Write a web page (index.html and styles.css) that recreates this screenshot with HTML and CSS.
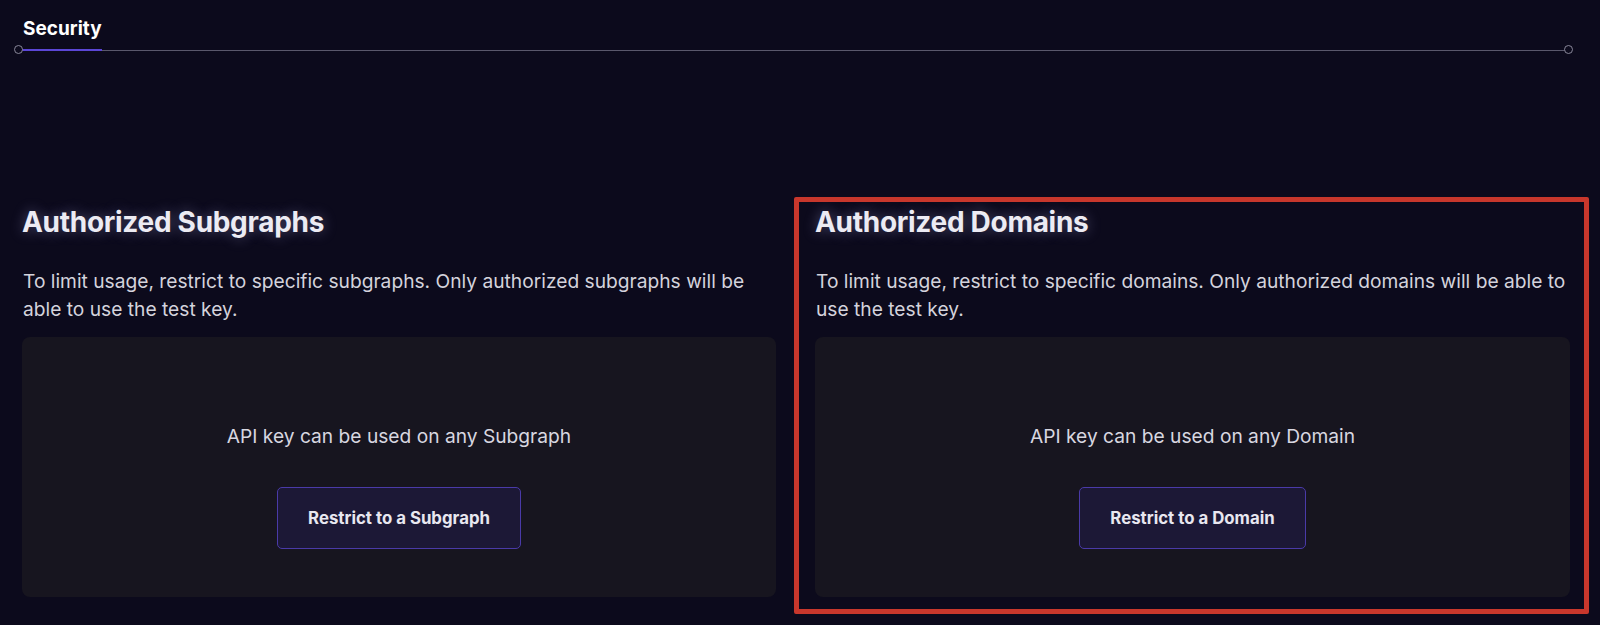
FILE: index.html
```html
<!DOCTYPE html>
<html lang="en">
<head>
<meta charset="utf-8">
<title>Security</title>
<link rel="stylesheet" href="styles.css">
</head>
<body>
  <nav class="tabs">
    <div class="tab tab-active">Security</div>
  </nav>
  <main class="columns">
    <section class="col">
      <h2 class="title">Authorized Subgraphs</h2>
      <p class="desc">To limit usage, restrict to specific subgraphs. Only authorized subgraphs will be able to use the test key.</p>
      <div class="card">
        <p class="card-text">API key can be used on any Subgraph</p>
        <button class="btn">Restrict to a Subgraph</button>
      </div>
    </section>
    <section class="col col-highlight">
      <h2 class="title">Authorized Domains</h2>
      <p class="desc">To limit usage, restrict to specific domains. Only authorized domains will be able to use the test key.</p>
      <div class="card">
        <p class="card-text">API key can be used on any Domain</p>
        <button class="btn">Restrict to a Domain</button>
      </div>
      <div class="highlight"></div>
    </section>
  </main>
</body>
</html>
```

FILE: styles.css
```css
* { box-sizing: border-box; }

html, body {
  margin: 0;
  padding: 0;
  background: #0c0a1c;
  height: 100%;
  overflow: hidden;
}

body {
  font-family: "Inter", "Lato", "Liberation Sans", sans-serif;
  color: #e6e5ee;
}

.tabs {
  position: relative;
  display: flex;
  margin: 0 30px 0 17px;
  padding-top: 16px;
  border-bottom: 1px solid #5a586c;
}

.tabs::before,
.tabs::after {
  content: "";
  position: absolute;
  bottom: -4px;
  width: 7px;
  height: 7px;
  border: 1.5px solid #8a889a;
  border-radius: 50%;
  background: #0c0a1c;
}

.tabs::before { left: -3px; }
.tabs::after { right: -3px; }

.tab {
  font-size: 19px;
  line-height: 24px;
  font-weight: 700;
  padding: 1px 0 8px 6px;
  color: #ffffff;
}

.tab-active {
  border-bottom: 2px solid #5b46d6;
  margin-bottom: -1px;
}

.columns {
  display: grid;
  grid-template-columns: 754px 755px;
  column-gap: 39px;
  padding: 0 30px 0 22px;
  margin-top: 153px;
}

.col {
  position: relative;
  display: flex;
  flex-direction: column;
}

.title {
  margin: 0;
  font-size: 28px;
  line-height: 36px;
  font-weight: 700;
  color: #ecebf3;
  letter-spacing: -0.3px;
  text-shadow: 0 0 14px rgba(190, 190, 255, 0.38);
}

.desc {
  margin: 27px 0 0;
  font-size: 19.2px;
  line-height: 28px;
  color: #d4d3dc;
  padding-left: 1px;
}

.card {
  margin-top: 14px;
  height: 260px;
  background: #17151f;
  border-radius: 8px;
  display: flex;
  flex-direction: column;
  align-items: center;
  padding-top: 85px;
}

.card-text {
  margin: 0;
  font-size: 19.2px;
  line-height: 28px;
  color: #d8d7e0;
}

.btn {
  margin-top: 37px;
  height: 62px;
  padding: 0 30px;
  background: #1c1836;
  border: 1.5px solid #4a3aa8;
  border-radius: 5px;
  color: #e8e7f0;
  font-family: "Inter", "Lato", "Liberation Sans", sans-serif;
  font-size: 16.8px;
  font-weight: 700;
  cursor: pointer;
}

.highlight {
  position: absolute;
  top: -7px;
  left: -21px;
  right: -19px;
  bottom: -17px;
  border: 5px solid #c8372c;
  border-radius: 2px;
  pointer-events: none;
}
```
